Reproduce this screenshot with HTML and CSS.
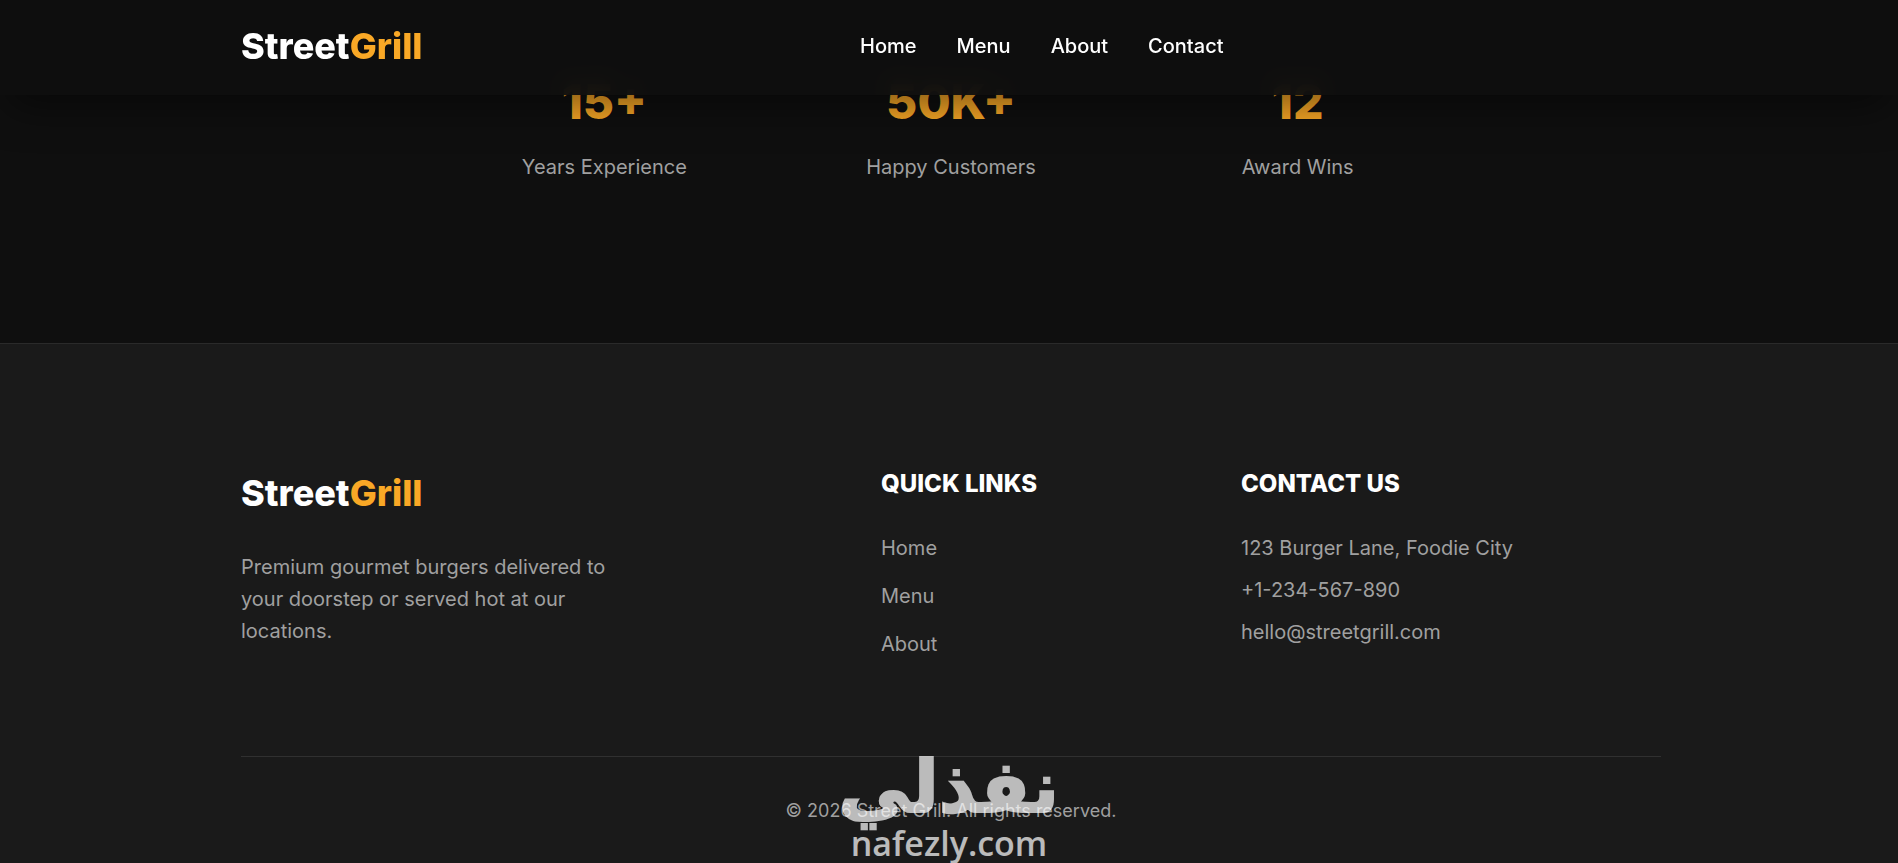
FILE: index.html
```html
<!DOCTYPE html>
<html lang="en">
<head>
<meta charset="utf-8">
<title>StreetGrill</title>
<link rel="stylesheet" href="styles.css">
</head>
<body>
<header class="header">
  <div class="container header-inner">
    <a class="logo" href="#">Street<span class="logo-accent">Grill</span></a>
    <nav class="nav">
      <a href="#">Home</a>
      <a href="#">Menu</a>
      <a href="#">About</a>
      <a href="#">Contact</a>
    </nav>
  </div>
</header>
<main class="stats">
  <div class="stat"><strong class="stat-number">15+</strong><p class="stat-label">Years Experience</p></div>
  <div class="stat"><strong class="stat-number">50K+</strong><p class="stat-label">Happy Customers</p></div>
  <div class="stat"><strong class="stat-number">12</strong><p class="stat-label">Award Wins</p></div>
</main>
<footer class="footer">
  <div class="container">
    <div class="footer-grid">
      <section>
        <a class="logo" href="#">Street<span class="logo-accent">Grill</span></a>
        <p class="footer-about">Premium gourmet burgers delivered to your doorstep or served hot at our locations.</p>
      </section>
      <section>
        <h4 class="footer-title">QUICK LINKS</h4>
        <ul class="footer-links">
          <li><a href="#">Home</a></li>
          <li><a href="#">Menu</a></li>
          <li><a href="#">About</a></li>
        </ul>
      </section>
      <section>
        <h4 class="footer-title">CONTACT US</h4>
        <address class="footer-contact">
          <p>123 Burger Lane, Foodie City</p>
          <p>+1-234-567-890</p>
          <p>hello@streetgrill.com</p>
        </address>
      </section>
    </div>
    <p class="copyright">© 2026 Street Grill. All rights reserved.</p>
  </div>
</footer>
<div class="watermark">
  <span class="watermark-ar" lang="ar" dir="rtl">نفذلي</span>
  <span class="watermark-en">nafezly.com</span>
</div>
</body>
</html>
```
FILE: styles.css
```css
* { box-sizing: border-box; margin: 0; padding: 0; }
body {
  position: relative;
  background: #0f0f0f;
  color: #fff;
  font: 20px/32px Inter, "Liberation Sans", sans-serif;
  overflow-x: hidden;
}
a { color: inherit; text-decoration: none; }
ul { list-style: none; }
.container { max-width: 1500px; margin: 0 auto; padding: 0 38px 0 42px; }
.header {
  position: fixed;
  top: 0;
  left: 0;
  right: 0;
  z-index: 10;
  padding: 17px 0 20px;
  background: rgba(15, 15, 15, 0.95);
  backdrop-filter: blur(10px);
  box-shadow: 0 20px 40px -10px rgba(0, 0, 0, 0.5);
}
.header-inner { display: flex; justify-content: space-between; align-items: center; }
.header-inner::after { content: ""; }
.logo { display: block; font-size: 36px; font-weight: 800; line-height: 58px; }
.logo-accent { color: #f9a826; }
.nav { display: flex; gap: 40px; font-weight: 500; }
.stats {
  display: grid;
  grid-template-columns: repeat(3, 1fr);
  gap: 40px;
  max-width: 1004px;
  margin: 0 auto;
  padding: 59px 0 160px 4px;
  text-align: center;
}
.stat-number { display: block; margin-bottom: 6px; color: #f9a826; font-size: 48px; font-weight: 800; line-height: 86px; }
.stat-label, .footer { color: #a0a0a0; }
.footer { padding: 120px 0 38px; background: #1a1a1a; border-top: 1px solid #2a2a2a; }
.footer-grid { display: grid; grid-template-columns: 2fr 1fr 1.5fr; gap: 80px; padding-bottom: 80px; }
.footer .logo { margin-bottom: 29px; color: #fff; }
.footer-about { max-width: 400px; }
.footer-title { margin-bottom: 28px; color: #fff; font-size: 24px; font-weight: 800; line-height: 40px; }
.footer-links li { margin-bottom: 16px; }
.footer-contact { font-style: normal; }
.footer-contact p { margin-bottom: 10px; }
.copyright { padding-top: 39px; border-top: 1px solid #303030; font-size: 18px; line-height: 29px; text-align: center; }
.watermark {
  position: absolute;
  left: 0;
  right: 0;
  bottom: 0;
  display: flex;
  flex-direction: column;
  align-items: center;
  color: #fff;
  opacity: 0.7;
  pointer-events: none;
}
.watermark-ar { font: 700 72px/72px "DejaVu Sans", sans-serif; -webkit-text-stroke: 2px #fff; }
.watermark-en { font: 600 34px/40px "Open Sans", sans-serif; }
```
